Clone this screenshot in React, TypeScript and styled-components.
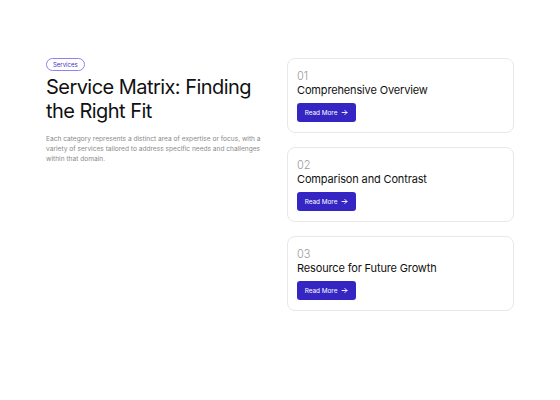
import React from "react";
import styled, {createGlobalStyle} from "styled-components";

const GlobalStyle = createGlobalStyle`
  html, body {
    margin: 0;
    padding: 0;
    background: #ffffff;
  }
  body {
    font-family: Inter, "Noto Sans", sans-serif;
    color: #111111;
  }
`;

const Page = styled.div`
  width: 560px;
  height: 400px;
  box-sizing: border-box;
  padding: 58px 46px 0 46px;
  display: flex;
  gap: 24px;
`;

const Intro = styled.div`
  width: 217px;
  display: flex;
  flex-direction: column;
  align-items: flex-start;
`;

const Badge = styled.span`
  height: 13px;
  box-sizing: border-box;
  padding: 0 6px;
  border: 1px solid #8f82f2;
  border-radius: 999px;
  font-size: 6px;
  line-height: 11px;
  color: #3a2fc4;
`;

const Heading = styled.h1`
  margin: 4px 0 0;
  width: 230px;
  font-size: 20px;
  line-height: 24px;
  font-weight: 400;
  letter-spacing: -0.55px;
  color: #111111;
`;

const Lead = styled.p`
  margin: 11px 0 0;
  font-size: 6.6px;
  line-height: 10px;
  color: #8a8a8a;
`;

const Cards = styled.div`
  width: 227px;
  display: flex;
  flex-direction: column;
  gap: 14px;
`;

const Card = styled.div`
  height: 75px;
  box-sizing: border-box;
  padding: 10px 10px 0 9px;
  border: 1px solid #e8e8e8;
  border-radius: 8px;
  display: flex;
  flex-direction: column;
  align-items: flex-start;
`;

const Number = styled.div`
  font-size: 11px;
  line-height: 14px;
  font-weight: 300;
  color: #9a9a9a;
`;

const Title = styled.div`
  margin-top: -1px;
  font-size: 11px;
  line-height: 16px;
  color: #111111;
  letter-spacing: -0.15px;
`;

const Button = styled.button`
  margin-top: 5px;
  width: 59px;
  height: 19px;
  border: none;
  border-radius: 3px;
  background: #3526c4;
  color: #ffffff;
  font-family: inherit;
  font-size: 6.4px;
  display: flex;
  align-items: center;
  justify-content: center;
  gap: 4px;
  padding: 0;
`;

const items = [
  {num: "01", title: "Comprehensive Overview"},
  {num: "02", title: "Comparison and Contrast"},
  {num: "03", title: "Resource for Future Growth"},
];

const Arrow = () => (
  <svg width="7" height="7" viewBox="0 0 10 10" fill="none">
    <path
      d="M1.5 5h7M5.5 2l3 3-3 3"
      stroke="#ffffff"
      strokeWidth="1.3"
      strokeLinecap="round"
      strokeLinejoin="round"
    />
  </svg>
);

export default function App() {
  return (
    <>
      <GlobalStyle />
      <Page>
        <Intro>
          <Badge>Services</Badge>
          <Heading>Service Matrix: Finding the Right Fit</Heading>
          <Lead>
            Each category represents a distinct area of expertise or focus, with a
            variety of services tailored to address specific needs and challenges
            within that domain.
          </Lead>
        </Intro>
        <Cards>
          {items.map((it) => (
            <Card key={it.num}>
              <Number>{it.num}</Number>
              <Title>{it.title}</Title>
              <Button>
                Read More <Arrow />
              </Button>
            </Card>
          ))}
        </Cards>
      </Page>
    </>
  );
}
